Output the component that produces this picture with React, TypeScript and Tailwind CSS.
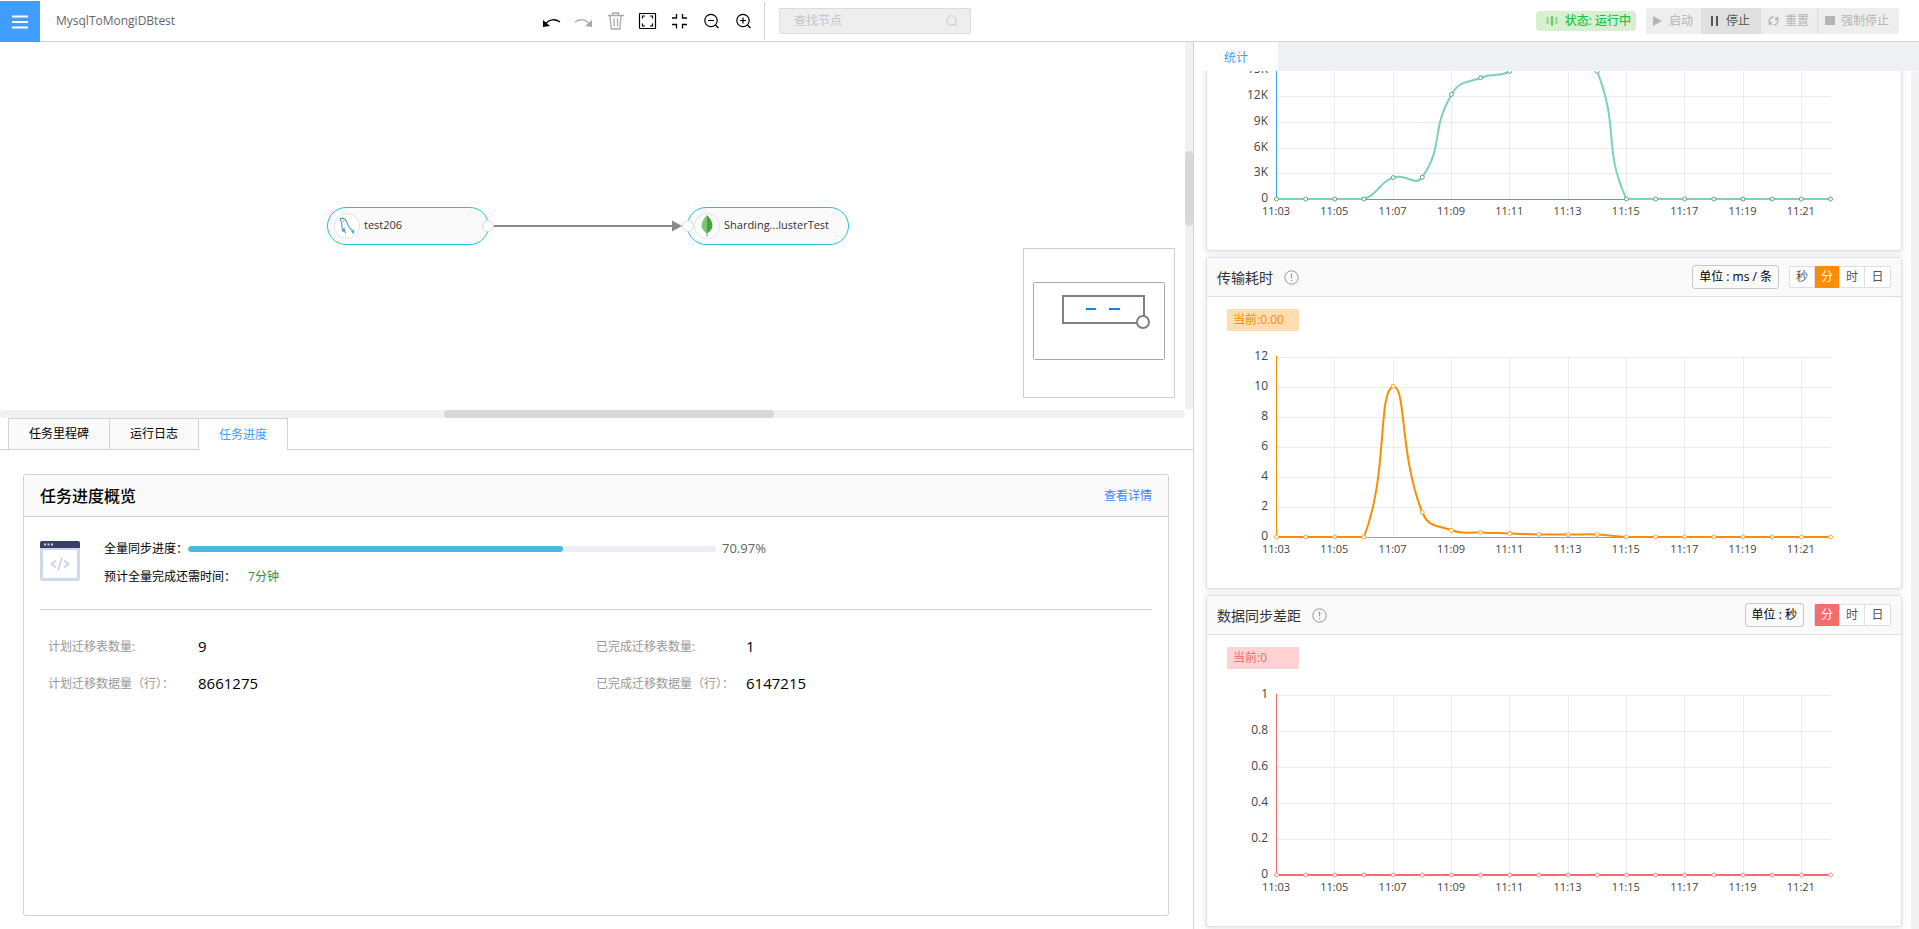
import { useState } from "react";

type Point = { x: number; y: number };

type Series = {
  values: number[];
  ticks: { value: number; label: string }[];
  max: number;
  axisColor: string;
  lineColor: string;
  dotColor: string;
};

const times = [
  "11:03", "11:04", "11:05", "11:06", "11:07", "11:08", "11:09", "11:10", "11:11", "11:12",
  "11:13", "11:14", "11:15", "11:16", "11:17", "11:18", "11:19", "11:20", "11:21", "11:22",
];

const throughput: Series = {
  values: [0, 0, 0, 0, 2500, 2550, 12200, 14150, 14900, 17800, 17600, 14900, 0, 0, 0, 0, 0, 0, 0, 0],
  ticks: [
    { value: 15000, label: "15K" },
    { value: 12000, label: "12K" },
    { value: 9000, label: "9K" },
    { value: 6000, label: "6K" },
    { value: 3000, label: "3K" },
    { value: 0, label: "0" },
  ],
  max: 21000,
  axisColor: "#409eff",
  lineColor: "#7dd0c1",
  dotColor: "#5fa874",
};

const duration: Series = {
  values: [0, 0, 0, 0, 10.05, 1.65, 0.45, 0.3, 0.24, 0.17, 0.16, 0.16, 0, 0, 0, 0, 0, 0, 0, 0],
  ticks: [12, 10, 8, 6, 4, 2, 0].map((value) => ({ value, label: String(value) })),
  max: 12,
  axisColor: "#fb8e00",
  lineColor: "#fb8e00",
  dotColor: "#fba63a",
};

const delay: Series = {
  values: times.map(() => 0),
  ticks: [1, 0.8, 0.6, 0.4, 0.2, 0].map((value) => ({ value, label: String(value) })),
  max: 1,
  axisColor: "#f56c6c",
  lineColor: "#f56c6c",
  dotColor: "#f78e8e",
};

const LEFT = 69;
const RIGHT = 623;
const TOP = 26;
const BOTTOM = 206;

// Bezier through all points, control points kept inside the data's bounding box
function smoothPath(points: Point[]) {
  const minY = Math.min(...points.map((p) => p.y));
  const maxY = Math.max(...points.map((p) => p.y));
  const clamp = (y: number) => Math.max(minY, Math.min(maxY, y));
  let d = `M${points[0].x},${points[0].y}`;
  let cp0 = points[0];
  for (let i = 1; i < points.length; i++) {
    const prev = points[i - 1];
    const p = points[i];
    const next = points[i + 1] ?? p;
    const lenPrev = Math.hypot(p.x - prev.x, p.y - prev.y);
    const lenNext = Math.hypot(next.x - p.x, next.y - p.y);
    const ratio = lenNext / (lenNext + lenPrev);
    const vx = next.x - prev.x;
    const vy = next.y - prev.y;
    const cp1 =
      i === points.length - 1
        ? p
        : { x: p.x - vx * 0.5 * (1 - ratio), y: clamp(p.y - vy * 0.5 * (1 - ratio)) };
    d += ` C${cp0.x},${cp0.y} ${cp1.x},${cp1.y} ${p.x},${p.y}`;
    cp0 = { x: p.x + vx * 0.5 * ratio, y: clamp(p.y + vy * 0.5 * ratio) };
  }
  return d;
}

function LineChart({ series }: { series: Series }) {
  const x = (i: number) => LEFT + ((RIGHT - LEFT) * i) / (times.length - 1);
  const y = (v: number) => BOTTOM - ((BOTTOM - TOP) * v) / series.max;
  const points = series.values.map((v, i) => ({ x: x(i) + 0.5, y: y(v) }));

  return (
    <svg viewBox="0 0 694 257" className="block w-full">
      {series.ticks.map((t) => (
        <g key={t.label}>
          <path d={`M${LEFT},${Math.round(y(t.value)) + 0.5}H${RIGHT + 1}`} stroke="#ececec" />
          <text x={LEFT - 8} y={y(t.value) + 3} textAnchor="end" className="fill-[#444] text-[12px]">
            {t.label}
          </text>
        </g>
      ))}
      {times.map((time, i) =>
        i % 2 === 0 ? (
          <g key={time}>
            <path d={`M${Math.round(x(i)) + 0.5},${TOP}V${BOTTOM}`} stroke="#ececec" />
            <text x={x(i)} y={BOTTOM + 16} textAnchor="middle" className="fill-[#444] text-[11px]">
              {time}
            </text>
          </g>
        ) : null
      )}
      <path
        d={`M${LEFT + 0.5},${TOP - 1}V${BOTTOM + 0.5}H${RIGHT + 1}`}
        fill="none"
        stroke={series.axisColor}
      />
      <path d={smoothPath(points)} fill="none" stroke={series.lineColor} strokeWidth="2" />
      {points.map((p, i) => (
        <circle key={i} cx={p.x} cy={p.y} r="2" fill="#fff" stroke={series.dotColor} />
      ))}
    </svg>
  );
}

function InfoIcon() {
  return (
    <svg width="15" height="15" viewBox="0 0 15 15" fill="none" stroke="#999" strokeWidth="1">
      <circle cx="7.5" cy="7.5" r="6.7" />
      <path d="M7.5 3.5v5M7.5 10v1.3" strokeWidth="1.2" />
    </svg>
  );
}

type ChartCardProps = {
  title: string;
  unit: string;
  ranges: string[];
  activeClass: string;
  badge: string;
  badgeClass: string;
  series: Series;
};

function ChartCard({ title, unit, ranges, activeClass, badge, badgeClass, series }: ChartCardProps) {
  const [range, setRange] = useState("分");

  return (
    <section className="shrink-0 rounded-[3px] border border-[#dcdfe6] bg-white shadow-[0_1px_6px_rgba(0,0,0,0.12)]">
      <header className="flex h-[39px] items-center border-b border-[#dcdfe6] bg-[#fafafa] px-[10px]">
        <h3 className="text-[14px] text-[#333]">{title}</h3>
        <span className="ml-[11px]">
          <InfoIcon />
        </span>
        <button className="ml-auto h-6 rounded-[3px] border border-[#c8c8c8] px-[6px] text-[12px] leading-5 whitespace-nowrap text-black">
          {unit}
        </button>
        <div className="ml-[10px] flex h-[22px] divide-x divide-[#dcdfe6] rounded-[2px] border border-[#dcdfe6] bg-white text-[12px] text-[#555]">
          {ranges.map((r) => (
            <button
              key={r}
              onClick={() => setRange(r)}
              className={r === range ? `-my-px w-[25px] text-white ${activeClass}` : "w-[25px]"}
            >
              {r}
            </button>
          ))}
        </div>
      </header>
      <div className={`mt-3 ml-5 h-[22px] w-[72px] px-[6px] text-[12px] leading-[22px] ${badgeClass}`}>{badge}</div>
      <LineChart series={series} />
    </section>
  );
}

function Toolbar() {
  return (
    <div className="flex items-center gap-3 text-black">
      <button aria-label="撤销">
        <svg width="20" height="20" viewBox="0 0 20 20" fill="none" stroke="currentColor">
          <path d="M4 12.5C7 8.200 13 7.500 18 11" strokeWidth="1.3" />
          <path d="M1 9v7l7-1z" fill="currentColor" stroke="none" />
        </svg>
      </button>
      <button aria-label="重做" className="text-[#aaa]">
        <svg width="20" height="20" viewBox="0 0 20 20" fill="none" stroke="currentColor">
          <path d="M15 12.5C12 8.200 6 7.500 1 11" strokeWidth="1.3" />
          <path d="M18 9v7l-7-1z" fill="currentColor" stroke="none" />
        </svg>
      </button>
      <button aria-label="删除" className="text-[#aaa]">
        <svg width="20" height="20" viewBox="0 0 20 20" fill="none" stroke="currentColor" strokeWidth="1.300">
          <path d="M2 4.500h16M6.500 4.500V2h6v2.500M4 5l1.200 13h8.600L15 5M8 7.500v8M11.500 7.500v8" />
        </svg>
      </button>
      <button aria-label="适应画布">
        <svg width="20" height="20" viewBox="0 0 20 20" fill="none" stroke="currentColor" strokeWidth="1.200">
          <rect x="1.500" y="2.500" width="16" height="15" rx="0.500" />
          <path d="M4.500 7.500v-2.500h2.500M12 5h2.500v2.500M14.500 12.500v2.500h-2.500M7 15H4.500v-2.500" />
        </svg>
      </button>
      <button aria-label="居中">
        <svg width="20" height="20" viewBox="0 0 20 20" fill="none" stroke="currentColor" strokeWidth="1.300">
          <path d="M2 7h4.500V3M17 7h-4.500V3M2 13.500h4.500v4M17 13.500h-4.500v4" />
        </svg>
      </button>
      <button aria-label="缩小">
        <svg width="20" height="20" viewBox="0 0 20 20" fill="none" stroke="currentColor" strokeWidth="1.200">
          <circle cx="9" cy="9.500" r="6.200" />
          <path d="M6 9.500h6M13.500 14l3 3" />
        </svg>
      </button>
      <button aria-label="放大">
        <svg width="20" height="20" viewBox="0 0 20 20" fill="none" stroke="currentColor" strokeWidth="1.200">
          <circle cx="9" cy="9.500" r="6.200" />
          <path d="M6 9.500h6M9 6.500v6M13.500 14l3 3" />
        </svg>
      </button>
    </div>
  );
}

function Header() {
  return (
    <header className="flex h-[42px] shrink-0 items-center border-b border-[#d3d3d3]">
      <button aria-label="菜单" className="mt-px -mb-px flex h-[41px] w-10 items-center justify-center bg-[#409eff]">
        <svg width="16" height="16" viewBox="0 0 16 16" stroke="#fff" strokeWidth="2">
          <path d="M0 2.500h16M0 8h16M0 13.500h16" />
        </svg>
      </button>
      <h1 className="w-[502px] pl-4 text-[12px] text-[#666]">MysqlToMongiDBtest</h1>
      <Toolbar />
      <div className="ml-[10px] h-[38px] border-l border-[#d3d3d3]" />
      <div className="ml-[14px] flex h-[26px] w-48 items-center rounded-[2px] border border-[#dcdcdc] bg-[#eee] pr-3 pl-[14px]">
        <input
          aria-label="查找节点"
          placeholder="查找节点"
          className="min-w-0 flex-1 bg-transparent text-[12px] outline-none placeholder:text-[#c0c4cc]"
        />
        <svg width="12" height="12" viewBox="0 0 12 12" fill="none" stroke="#c0c4cc">
          <circle cx="5.500" cy="5.500" r="4.700" />
          <path d="M9 9l2.500 2.500" />
        </svg>
      </div>
      <div className="ml-auto flex h-5 items-center gap-[7px] rounded-[4px] bg-[#d9efd2] pr-[5px] pl-[10px] text-[12px] font-medium whitespace-nowrap text-[#1fc14a]">
        <svg width="12" height="12" viewBox="0 0 12 12" stroke="#52b84f">
          <path d="M1.500 2v7M10.500 2v7" strokeWidth="2" opacity="0.500" />
          <path d="M4 1.500v8M8 1.500v8" strokeWidth="1" opacity="0.250" />
          <path d="M6 1v10" strokeWidth="1.500" />
        </svg>
        状态: 运行中
      </div>
      <div className="mr-5 ml-[10px] flex h-[26px] divide-x divide-[#dcdcdc] overflow-hidden rounded-[2px] bg-[#eee] text-[12px] whitespace-nowrap text-[#b4b4b4]">
        <button disabled className="flex items-center gap-[7px] pr-2 pl-[7px]">
          <svg width="9" height="10" viewBox="0 0 9 10" fill="currentColor">
            <path d="M0 0l9 5-9 5z" />
          </svg>
          启动
        </button>
        <button className="flex items-center gap-[7px] bg-[#e0e0e0] pr-[10px] pl-2 text-[#555]">
          <svg width="9" height="10" viewBox="0 0 9 10" fill="currentColor">
            <path d="M1 0h2v10H1zM6 0h2v10H6z" />
          </svg>
          停止
        </button>
        <button disabled className="flex items-center gap-[6px] pr-2 pl-[7px]">
          <svg width="11" height="10" viewBox="0 0 11 10" fill="none" stroke="currentColor" strokeWidth="1.300">
            <path d="M2.500 8a4 4 0 0 1 3-7M8.500 2a4 4 0 0 1-3 7" />
            <path d="M0.500 8h2.500V5.500M10.500 2H8v2.500" />
          </svg>
          重置
        </button>
        <button disabled className="flex items-center gap-[6px] pr-[10px] pl-[7px]">
          <span className="h-[9px] w-[10px] bg-[#b4b4b4]" />
          强制停止
        </button>
      </div>
    </header>
  );
}

function MysqlIcon() {
  return (
    <svg width="16" height="18" viewBox="0 0 16 18" fill="none" stroke="#4a94c4" strokeWidth="1.100">
      <path d="M1 1.500C3.500.500 6 2 7.500 4.500 9 7 9.500 9.500 11 11.500c1 1.200 3 1.500 4 2.500l-2 .500 2 2" />
      <path d="M1 1.500c0 1.500 1 2.500 1.500 4S3 8 3 10s0 3 1 4.500c.700-.500.500-2 1-3 .500 2 .700 3.500 2 5" />
      <path d="M4 4l.700.700" />
    </svg>
  );
}

function MongoIcon() {
  return (
    <svg width="12" height="22" viewBox="0 0 12 22">
      <path d="M6 0C2.500 4 .500 7 .500 10.500S3 16.500 6 18.500z" fill="#7cc576" />
      <path d="M6 0c3.500 4 5.500 7 5.500 10.500S9 16.500 6 18.500z" fill="#3fa535" />
      <path d="M6 17v4.500" stroke="#a08060" />
    </svg>
  );
}

function Canvas() {
  return (
    <div className="grid h-[376px] shrink-0 grid-cols-[1fr_8px] grid-rows-[1fr_8px]">
      <div className="relative overflow-hidden">
        <svg width="200" height="12" viewBox="0 0 200 12" className="absolute top-[178px] left-[488px]">
          <path d="M5 6h180" stroke="#8a8a8a" strokeWidth="2" />
          <path d="M184 0.500l10 5.500-10 5.500z" fill="#8a8a8a" />
        </svg>
        <div className="absolute top-[165px] left-[327px] flex h-[38px] w-[162px] items-center rounded-[20px] border border-[#26c2d8] bg-[#fafafa] pl-[6px]">
          <span className="flex h-[26px] w-[26px] items-center justify-center rounded-full border border-[#e4e4e4] bg-white">
            <MysqlIcon />
          </span>
          <span className="ml-1 pb-[2px] text-[11px] text-[#333]">test206</span>
        </div>
        <div className="absolute top-[165px] left-[687px] flex h-[38px] w-[162px] items-center rounded-[20px] border border-[#26c2d8] bg-[#fafafa] pl-[6px]">
          <span className="flex h-[26px] w-[26px] items-center justify-center rounded-full border border-[#e4e4e4] bg-white">
            <MongoIcon />
          </span>
          <span className="ml-1 pb-[2px] text-[11px] text-[#333]">Sharding...lusterTest</span>
        </div>
        <span className="absolute top-[178px] left-[482px] h-3 w-3 rounded-full border border-[#d8dade] bg-white" />
        <span className="absolute top-[178px] left-[682px] h-3 w-3 rounded-full border border-[#d8dade] bg-white" />

        {/* Minimap */}
        <div className="absolute right-[10px] bottom-3 h-[150px] w-[152px] border border-[#d0d0d0] bg-white">
          <svg width="150" height="148" viewBox="0 0 150 148" fill="none">
            <rect x="9.500" y="33.500" width="131" height="77" rx="1" stroke="#aaa" />
            <rect x="39" y="47" width="81" height="27" stroke="#808080" strokeWidth="2" />
            <path d="M62 60h10M85 60h11" stroke="#0b85e8" strokeWidth="2" />
            <circle cx="119" cy="73" r="6" fill="#fff" stroke="#808080" strokeWidth="2" />
          </svg>
        </div>
      </div>
      <div className="rounded-b-[4px] bg-[#f1f1f1] pt-[109px]">
        <div className="h-[75px] rounded-[4px] bg-[#d8d8d8]" />
      </div>
      <div className="rounded-[4px] bg-[#f1f1f1] pl-[444px]">
        <div className="h-2 w-[330px] rounded-[4px] bg-[#d8d8d8]" />
      </div>
    </div>
  );
}

const stats = [
  { label: "计划迁移表数量:", value: "9" },
  { label: "已完成迁移表数量:", value: "1" },
  { label: "计划迁移数据量（行）：", value: "8661275" },
  { label: "已完成迁移数据量（行）：", value: "6147215" },
];

function CodeWindowIcon() {
  return (
    <svg width="40" height="40" viewBox="0 0 40 40" fill="none">
      <rect width="40" height="40" rx="2" fill="#d0d9ec" />
      <path d="M0 7V2a2 2 0 0 1 2-2h36a2 2 0 0 1 2 2v5z" fill="#3a3f66" />
      <path d="M4 3.500h2M7.500 3.500h2M11 3.500h2" stroke="#d0d9ec" strokeWidth="2" />
      <rect x="3" y="9" width="34" height="28" rx="1" fill="#fff" />
      <path d="M16 19.500l-4.500 3.500 4.500 3.500M24 19.500l4.500 3.500-4.500 3.500M22 16.500l-4 13" stroke="#cbd6ee" strokeWidth="2" />
    </svg>
  );
}

function ProgressPanel() {
  const progress = 70.97;

  return (
    <section className="mt-6 mr-6 mb-[13px] ml-[23px] flex-1 rounded-[3px] border border-[#d3d3d3]">
      <header className="flex h-[42px] items-center justify-between border-b border-[#d3d3d3] bg-[#fafafa] px-4">
        <h2 className="text-[16px] font-medium text-black">任务进度概览</h2>
        <a href="#detail" className="text-[12px] text-[#3a84ff]">
          查看详情
        </a>
      </header>
      <div className="mx-4 flex h-[93px] border-b border-[#d3d3d3] pt-[22px] text-[12px] text-black">
        <div className="pt-[2px]">
          <CodeWindowIcon />
        </div>
        <div className="ml-6 flex-1">
          <div className="flex h-5 items-center">
            <span className="w-[84px]">全量同步进度：</span>
            <div className="h-[6px] w-[528px] overflow-hidden rounded-full bg-[#ebeef5]">
              <div className="h-full rounded-full bg-[#50b5e3]" style={{ width: `${progress}%` }} />
            </div>
            <span className="ml-[6px] text-[13px] text-[#606266]">{progress}%</span>
          </div>
          <div className="mt-2 flex h-5 items-center gap-3">
            <span>预计全量完成还需时间：</span>
            <span className="text-[#368b3b]">7分钟</span>
          </div>
        </div>
      </div>
      <dl className="mx-6 mt-[18px] grid grid-cols-2">
        {stats.map((s) => (
          <div key={s.label} className="flex h-[37px] items-center">
            <dt className="w-[150px] text-[12px] text-[#999]">{s.label}</dt>
            <dd className="text-[15px] text-black">{s.value}</dd>
          </div>
        ))}
      </dl>
    </section>
  );
}

function BottomPanel() {
  const [tab, setTab] = useState("任务进度");

  return (
    <div className="flex flex-1 flex-col">
      <div role="tablist" className="flex h-8 text-[12px]">
        <div className="w-2 border-b border-[#d3d3d3]" />
        {["任务里程碑", "运行日志", "任务进度"].map((t) => (
          <button
            key={t}
            role="tab"
            aria-selected={t === tab}
            onClick={() => setTab(t)}
            className={
              t === tab
                ? "border-t border-r border-l border-[#d3d3d3] px-5 text-[#409eff]"
                : "border-t border-b border-l border-[#d3d3d3] bg-[#fafafa] px-5 text-black"
            }
          >
            {t}
          </button>
        ))}
        <div className="flex-1 border-b border-[#d3d3d3]" />
      </div>
      <ProgressPanel />
    </div>
  );
}

function StatsPanel() {
  return (
    <aside className="flex w-[726px] shrink-0 flex-col border-l border-[#d3d3d3]">
      <div role="tablist" className="flex h-[29px] shrink-0 bg-[#eff0f4]">
        <button role="tab" aria-selected="true" className="w-[84px] bg-white pt-[2px] text-[12px] text-[#409eff]">
          统计
        </button>
      </div>
      <div className="flex min-h-0 flex-1">
        <div className="flex min-w-0 flex-1 flex-col justify-end gap-[6px] overflow-hidden pr-[9px] pb-[2px] pl-3">
          <section className="shrink-0 rounded-[3px] border border-[#dcdfe6] bg-white shadow-[0_1px_6px_rgba(0,0,0,0.12)]">
            <LineChart series={throughput} />
          </section>
          <ChartCard
            title="传输耗时"
            unit="单位 : ms / 条"
            ranges={["秒", "分", "时", "日"]}
            activeClass="bg-[#fb8e00]"
            badge="当前:0.00"
            badgeClass="bg-[#feddb2] text-[#fb8e00]"
            series={duration}
          />
          <ChartCard
            title="数据同步差距"
            unit="单位 : 秒"
            ranges={["分", "时", "日"]}
            activeClass="bg-[#f56c6c]"
            badge="当前:0"
            badgeClass="bg-[#ffd2d4] text-[#f56c6c]"
            series={delay}
          />
        </div>
        <div className="w-2 rounded-t-[4px] bg-[#f1f1f1]" />
      </div>
    </aside>
  );
}

export default function App() {
  return (
    <div className="flex h-screen flex-col overflow-hidden bg-white font-['Open_Sans','Noto_Sans_CJK_SC',sans-serif]">
      <Header />
      <div className="flex min-h-0 flex-1">
        <main className="flex min-w-0 flex-1 flex-col">
          <Canvas />
          <BottomPanel />
        </main>
        <StatsPanel />
      </div>
    </div>
  );
}
